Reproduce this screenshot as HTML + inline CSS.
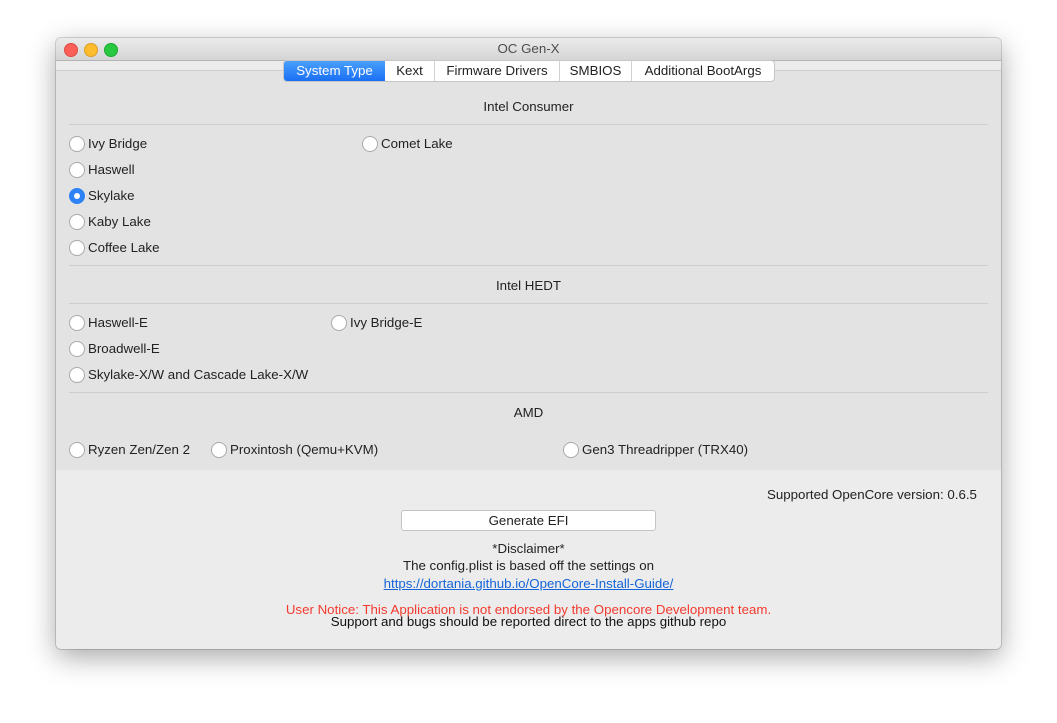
<!DOCTYPE html>
<html><head><style>
body{margin:0;width:1057px;height:723px;background:#fff;position:relative;font-family:"Liberation Sans",sans-serif;font-size:13.3px;color:#222;overflow:hidden}
.win{position:absolute;left:56px;top:38px;width:945px;height:611px;background:#ececec;border-radius:5px;box-shadow:0 8px 28px rgba(0,0,0,.35),0 0 0 1px rgba(0,0,0,.15);overflow:hidden}
.tb{position:absolute;left:0;top:0;width:100%;height:22px;background:linear-gradient(#ebebeb,#d5d5d5);border-bottom:1px solid #b5b5b5;text-align:center;line-height:22px;color:#4d4d4d}
.dot{position:absolute;top:5px;width:12px;height:12px;border-radius:50%}
.panel{position:absolute;left:0;top:32px;width:945px;height:399px;background:#e3e3e3;border-top:1px solid #cfcfcf}
.tabs{position:absolute;left:227px;top:22px;height:20px;display:flex;border:1px solid #c6c6c6;border-radius:4px;background:#fff;overflow:hidden;z-index:2}
.tabs div{line-height:20px;border-left:1px solid #d2d2d2;color:#222;text-align:center;box-sizing:border-box}
.tabs div.a{background:linear-gradient(#4aa0fb,#1a6ff5);color:#fff;border:none}
.t{position:absolute;white-space:nowrap}
.h{position:absolute;left:0;width:945px;text-align:center}
.ln{position:absolute;left:13px;width:919px;height:1px;background:#cdcdcd}
.r{position:absolute;white-space:nowrap;padding-left:19px;line-height:16px}
.r:before{content:"";position:absolute;left:0;top:0;width:14px;height:14px;border-radius:50%;background:#fff;border:1px solid #aaa}
.r.s:before{background:#2d83f6;border-color:#2d83f6}
.r.s:after{content:"";position:absolute;left:5px;top:5px;width:6px;height:6px;border-radius:50%;background:#fff}
</style></head><body>
<div class="win">
<div class="tb">OC Gen-X
<div class="dot" style="left:8px;background:#fc5f57;border:.5px solid #de4a42"></div>
<div class="dot" style="left:28px;background:#fdbc2e;border:.5px solid #dd9e24"></div>
<div class="dot" style="left:48px;background:#28c840;border:.5px solid #1ea832"></div>
</div>
<div class="tabs"><div class="a" style="width:101px">System Type</div><div style="border-left:none;width:49px">Kext</div><div style="width:125px">Firmware Drivers</div><div style="width:72px">SMBIOS</div><div style="width:143px">Additional BootArgs</div></div>
<div class="panel">
<div class="h" style="top:28px">Intel Consumer</div>
<div class="ln" style="top:53px"></div>
<div class="r" style="left:13px;top:65px">Ivy Bridge</div>
<div class="r" style="left:306px;top:65px">Comet Lake</div>
<div class="r" style="left:13px;top:91px">Haswell</div>
<div class="r s" style="left:13px;top:117px">Skylake</div>
<div class="r" style="left:13px;top:143px">Kaby Lake</div>
<div class="r" style="left:13px;top:169px">Coffee Lake</div>
<div class="ln" style="top:194px"></div>
<div class="h" style="top:207px">Intel HEDT</div>
<div class="ln" style="top:232px"></div>
<div class="r" style="left:13px;top:244px">Haswell-E</div>
<div class="r" style="left:275px;top:244px">Ivy Bridge-E</div>
<div class="r" style="left:13px;top:270px">Broadwell-E</div>
<div class="r" style="left:13px;top:296px">Skylake-X/W and Cascade Lake-X/W</div>
<div class="ln" style="top:321px"></div>
<div class="h" style="top:334px">AMD</div>
<div class="r" style="left:13px;top:371px">Ryzen Zen/Zen 2</div>
<div class="r" style="left:155px;top:371px">Proxintosh (Qemu+KVM)</div>
<div class="r" style="left:507px;top:371px">Gen3 Threadripper (TRX40)</div>
</div>
<div class="t" style="left:711px;top:449px">Supported OpenCore version: 0.6.5</div>
<div style="position:absolute;left:345px;top:472px;width:253px;height:19px;background:#fff;border:1px solid #c4c4c4;border-radius:3px;text-align:center;line-height:19px">Generate EFI</div>
<div class="h" style="top:503px">*Disclaimer*</div>
<div class="h" style="top:520px">The config.plist is based off the settings on</div>
<div class="h" style="top:538px"><span style="color:#1565d8;text-decoration:underline">https://dortania.github.io/OpenCore-Install-Guide/</span></div>
<div class="h" style="top:564px;color:#f23a2f">User Notice: This Application is not endorsed by the Opencore Development team.</div>
<div class="h" style="top:576px;color:#111">Support and bugs should be reported direct to the apps github repo</div>
</div>
</body></html>
